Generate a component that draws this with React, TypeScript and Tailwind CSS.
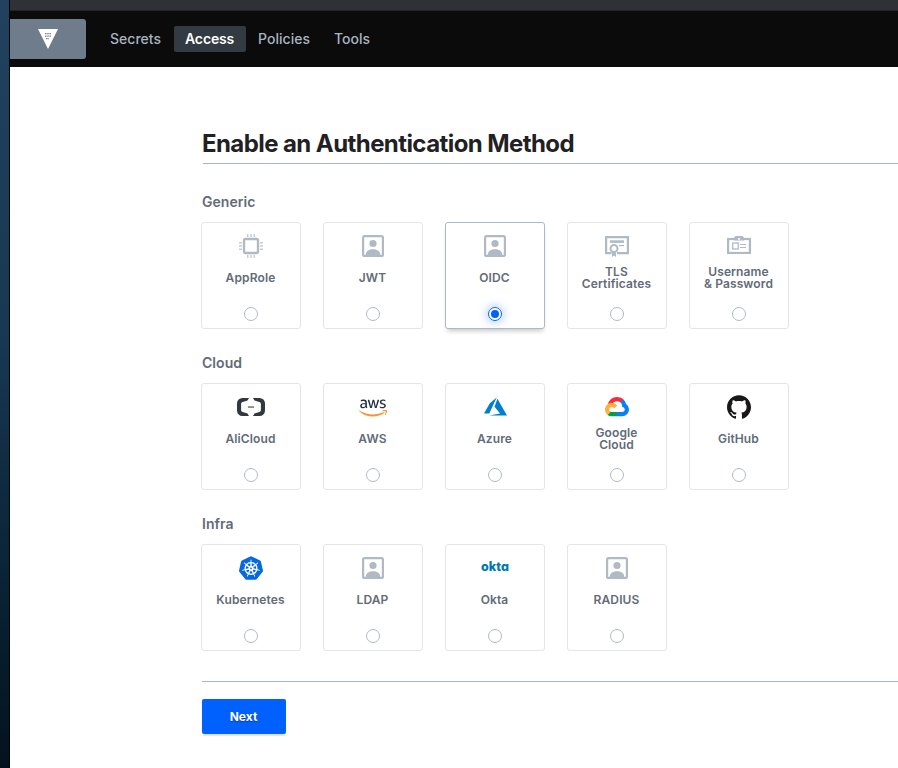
import React from "react";
import { FaAws } from "react-icons/fa";
import { SiGithub, SiKubernetes } from "react-icons/si";

const ChipIcon = () => (
  <svg width="24" height="24" viewBox="0 0 24 24" fill="none">
    <rect x="5" y="5" width="14" height="14" rx="1.5" stroke="#afbac5" strokeWidth="2.4" />
    <path d="M8.7 0v3M12 0v3M15.3 0v3M8.7 21v3M12 21v3M15.3 21v3M0 8.7h3M0 12h3M0 15.3h3M21 8.7h3M21 12h3M21 15.3h3" stroke="#c5cdd5" strokeWidth="1.5" />
  </svg>
);

const UserIcon = () => (
  <svg width="22" height="22" viewBox="0 0 22 22">
    <rect x="1.1" y="1.1" width="19.8" height="19.8" rx="1.5" fill="none" stroke="#afbac5" strokeWidth="2.2" />
    <circle cx="11" cy="8.5" r="3.6" fill="#afbac5" />
    <path d="M3.8 21v-1.5C3.8 16 7.5 14.3 11 14.3s7.2 1.7 7.2 5.2V21z" fill="#afbac5" />
  </svg>
);

const CertificateIcon = () => (
  <svg width="24" height="22" viewBox="0 0 24 22" fill="none" stroke="#afbac5">
    <path d="M6.5 18.2H1.1V2.1h21.8v16.1H12" strokeWidth="2.2" />
    <path d="M5 6.6h14" strokeWidth="2.6" />
    <path d="M14 10.6h5" strokeWidth="1.2" />
    <circle cx="9" cy="13.5" r="3.5" strokeWidth="2" />
    <path d="M7 17v5l2-1.5 2 1.5v-5z" fill="#afbac5" stroke="none" />
  </svg>
);

const BadgeIcon = () => (
  <svg width="24" height="18" viewBox="0 0 24 18" fill="none" stroke="#afbac5" className="-mt-0.5">
    <rect x="1.1" y="3" width="21.8" height="14" strokeWidth="2.2" />
    <path d="M7 3V1.5L8.5 0h7L17 1.5V4.5H7z" fill="#afbac5" stroke="none" />
    <path d="M11 3h2" stroke="#fff" strokeWidth="1.3" />
    <rect x="5.7" y="7" width="5.5" height="6" strokeWidth="1.3" />
    <path d="M13 8.5h6M13 11.5h6" strokeWidth="1" />
  </svg>
);

const AliCloudIcon = () => (
  <svg width="28" height="18" viewBox="0 0 28 18" fill="#32383e">
    <path d="M12 0H5.5A5.5 5.5 0 0 0 0 5.5v7A5.5 5.5 0 0 0 5.5 18H12l-1.5-2.6-4.8-1.3c-1-.3-1.6-1-1.6-2V5.9c0-1 .6-1.7 1.6-2l4.8-1.3zM16 0h6.5A5.5 5.5 0 0 1 28 5.5v7a5.5 5.5 0 0 1-5.5 5.5H16l1.5-2.6 4.8-1.3c1-.3 1.6-1 1.6-2V5.9c0-1-.6-1.7-1.6-2l-4.8-1.3z" />
    <path d="M11 8.2h6v1.7h-6z" fill="#7d8286" />
  </svg>
);

const AwsIcon = () => (
  <>
    <svg className="size-0" aria-hidden="true">
      <linearGradient id="aws" x1="0" y1="0" x2="0" y2="1">
        <stop offset=".63" stopColor="#252f3e" />
        <stop offset=".63" stopColor="#f79433" />
      </linearGradient>
    </svg>
    <FaAws size={28} className="mt-0.5 fill-[url(#aws)]" />
  </>
);

const AzureIcon = () => (
  <svg width="23" height="23" viewBox="0 0 24 24" fill="#0080cc" className="-mt-px">
    <path d="M5.483 21.3H24L14.025 4.013l-3.038 8.347 5.836 6.938L5.483 21.3zM13.23 2.7L6.105 8.677 0 19.253h5.505v.014L13.23 2.7z" />
  </svg>
);

const GoogleCloudIcon = () => (
  <svg width="24" height="19.3" viewBox="0 0 256 206">
    <path fill="#fb2b37" d="M170.252 56.819l22.253-22.253 1.483-9.370C153.437-11.677 88.976-7.496 52.421 33.920c-10.154 11.503-17.687 25.844-21.704 40.653l7.970-1.123 44.505-7.339 3.436-3.514c19.797-21.742 53.270-24.667 76.128-6.168z" />
    <path fill="#0b80f5" d="M224.205 73.918c-5.115-18.836-15.616-35.769-30.217-48.722l-31.232 31.232c13.188 10.776 20.701 27.010 20.379 44.037v5.544c15.351 0 27.797 12.445 27.797 27.796 0 15.352-12.446 27.485-27.797 27.485h-55.671l-5.466 5.934v33.340l5.466 5.231h55.671c39.930.311 72.552-31.494 72.863-71.424.188-24.203-11.745-46.893-31.793-60.453" />
    <path fill="#089c4a" d="M71.870 205.796h55.593V161.290H71.870c-3.961-.001-7.797-.852-11.399-2.498l-7.887 2.420-22.409 22.253-1.952 7.574c12.567 9.489 27.900 14.825 43.647 14.757" />
    <path fill="#ffb13b" d="M71.870 61.426C31.939 61.664-.237 94.228.001 134.158c.133 22.298 10.547 43.288 28.222 56.881l32.248-32.248c-13.991-6.321-20.208-22.786-13.887-36.776 6.320-13.990 22.786-20.207 36.775-13.887 6.165 2.785 11.102 7.723 13.887 13.887l32.248-32.247C115.773 71.832 94.453 61.345 71.870 61.426" />
  </svg>
);

const OktaLogo = () => (
  <span className="-mt-0.5 text-[12.5px] leading-none font-extrabold tracking-[0.05px] text-[#0077b3] [font-feature-settings:'cv11']">okta</span>
);

type Method = { lines: string[]; icon: React.ReactNode; selected?: boolean };

const groups: { title: string; methods: Method[] }[] = [
  {
    title: "Generic",
    methods: [
      { lines: ["AppRole"], icon: <ChipIcon /> },
      { lines: ["JWT"], icon: <UserIcon /> },
      { lines: ["OIDC"], icon: <UserIcon />, selected: true },
      { lines: ["TLS", "Certificates"], icon: <CertificateIcon /> },
      { lines: ["Username", "& Password"], icon: <BadgeIcon /> },
    ],
  },
  {
    title: "Cloud",
    methods: [
      { lines: ["AliCloud"], icon: <AliCloudIcon /> },
      { lines: ["AWS"], icon: <AwsIcon /> },
      { lines: ["Azure"], icon: <AzureIcon /> },
      { lines: ["Google", "Cloud"], icon: <GoogleCloudIcon /> },
      { lines: ["GitHub"], icon: <SiGithub size={24} color="#191717" /> },
    ],
  },
  {
    title: "Infra",
    methods: [
      { lines: ["Kubernetes"], icon: <SiKubernetes size={24} color="#0568df" /> },
      { lines: ["LDAP"], icon: <UserIcon /> },
      { lines: ["Okta"], icon: <OktaLogo /> },
      { lines: ["RADIUS"], icon: <UserIcon /> },
    ],
  },
];

function MethodCard({ lines, icon, selected }: Method) {
  return (
    <div
      className={`flex h-[107px] w-[100px] flex-col items-center rounded-[3px] border bg-white ${
        selected ? "border-[#acb8c3] shadow-[0_4px_5px_-2px_rgba(0,0,0,0.22)]" : "border-[#e3e5e7]"
      }`}
    >
      <div className="mt-[11px] flex h-6 items-center justify-center">{icon}</div>
      <div className="mt-[7px] flex h-[26px] flex-col items-center justify-center text-center text-[12px] leading-3 font-semibold tracking-[0.12px] whitespace-nowrap text-[#626b78]">
        <p className="-ml-px">
          {lines.map((line, i) => (
            <React.Fragment key={line}>
              {i > 0 && <br />}
              {line}
            </React.Fragment>
          ))}
        </p>
      </div>
      <div
        className={`mt-[16px] flex size-[14px] items-center justify-center rounded-full border ${
          selected ? "border-[#0061ff] shadow-[0_0_8px_2px_rgba(0,97,255,0.28)]" : "border-[#afbac6]"
        }`}
      >
        {selected && <span className="size-2 rounded-full bg-[#0061ff]" />}
      </div>
    </div>
  );
}

const tabs = ["Secrets", "Access", "Policies", "Tools"];

export default function App() {
  return (
    <div className="flex h-[768px] w-[898px] overflow-hidden bg-white font-['Inter',sans-serif]">
      <div className="w-2.5 shrink-0 border-r border-black bg-linear-to-b from-[#21415f] via-[#173752] via-45% to-[#03131e]" />
      <div className="flex min-w-0 flex-1 flex-col">
        <div className="h-[11px] border-b border-[#232427] bg-[#303136]" />
        <header className="flex h-14 items-center bg-[#0b0b0b]">
          <div className="flex h-10 w-[76px] items-center justify-center rounded-r-[3px] bg-[#6f7c8b]">
            <svg width="20" height="20" viewBox="0 0 20 20">
              <path d="M0 0h20L10 20z" fill="#fff" />
              <path d="M7 4.7h6M7 7.2h6M8 9.7h3" stroke="#7c8794" strokeWidth="1.3" strokeDasharray="1.6 .6" />
            </svg>
          </div>
          <nav className="ml-[12.5px] flex gap-px text-[14px] leading-[26px] font-medium">
            {tabs.map((tab) => (
              <a
                key={tab}
                className={`h-[26px] rounded-[2px] px-[11.5px] ${tab === "Access" ? "bg-[#323a42] font-semibold tracking-[-0.15px] text-white" : "tracking-[0.02px] text-[#a9b4c1]"}`}
              >
                {tab}
              </a>
            ))}
          </nav>
        </header>
        <main className="pl-48">
          <h1 className="mt-[61px] ml-px h-[36px] border-b border-[#a9b5be] text-[24px] leading-8 font-bold tracking-[-0.58px] text-[#1f2124]">
            <span className="-ml-px">Enable an Authentication Method</span>
          </h1>
          <div className="pt-[28px]">
            {groups.map((group) => (
              <section key={group.title} className="-ml-px h-[161px]">
                <h2 className="h-[30px] pl-px text-[14px] leading-5 font-semibold tracking-[0.05px] text-[#626b78]">{group.title}</h2>
                <div className="flex gap-[22px]">
                  {group.methods.map((method) => (
                    <MethodCard key={method.lines[0]} {...method} />
                  ))}
                </div>
              </section>
            ))}
          </div>
          <div className="mt-[6px] border-t border-[#a9b5c1] pt-[17px]">
            <button className="h-[35px] w-[84px] rounded-[2px] bg-[#0061ff] pr-2 text-[12px] font-bold text-white shadow-[0_3px_1px_-1px_rgba(0,0,0,0.12)] [text-shadow:0_1px_1px_rgba(0,0,0,0.35)] pl-[7px]">
              Next
            </button>
          </div>
        </main>
      </div>
    </div>
  );
}
